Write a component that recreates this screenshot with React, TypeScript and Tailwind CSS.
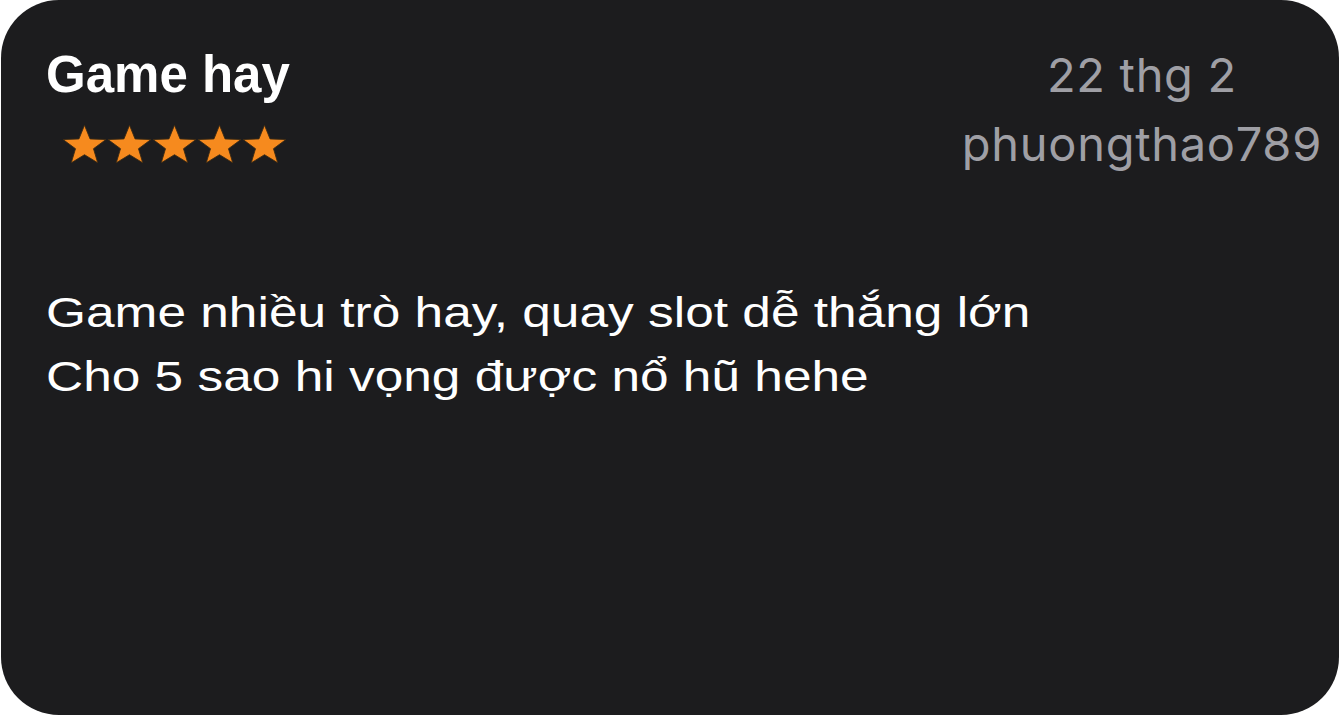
import React from "react";

const Star = () => (
  <svg width="45" height="38" viewBox="0 0 44 40.2" preserveAspectRatio="none">
    <polygon
      points="22,0.2 27.43,14.72 42.92,15.4 30.79,25.06 34.93,40 22,31.44 9.07,40 13.21,25.06 1.08,15.4 16.57,14.72"
      fill="#f68a1e"
      stroke="#3b2a14"
      strokeWidth="0.9"
      strokeLinejoin="miter"
    />
  </svg>
);

export default function App() {
  return (
    <div className="w-[1340px] h-[716px] bg-white overflow-hidden">
      <div className="w-[1338px] h-[715px] ml-[1px] rounded-[58px] bg-[#1c1c1e] pt-[45px] pl-[45px] pr-[17px]">
        <div className="flex justify-between items-start">
          <div className="flex flex-col">
            <div
              className="text-[51px] leading-[60px] font-bold text-white"
              style={{ fontFamily: '"Liberation Sans", Arial, sans-serif' }}
            >
              Game hay
            </div>
            <div className="flex mt-[20px] ml-[16px]">
              <Star />
              <Star />
              <Star />
              <Star />
              <Star />
            </div>
          </div>
          <div
            className="flex flex-col items-center text-[#9f9fa5] text-[47px] leading-[60px] tracking-[0.7px] gap-[9px]"
            style={{ fontFamily: 'Inter, "Noto Sans", sans-serif' }}
          >
            <div>22 thg 2</div>
            <div>phuongthao789</div>
          </div>
        </div>
        <div
          className="w-fit mt-[107px] text-white text-[42px] leading-[64px] origin-left scale-x-[1.224]"
          style={{ fontFamily: '"Liberation Sans", Arial, sans-serif' }}
        >
          <div>Game nhiều trò hay, quay slot dễ thắng lớn</div>
          <div>Cho 5 sao hi vọng được nổ hũ hehe</div>
        </div>
      </div>
    </div>
  );
}
